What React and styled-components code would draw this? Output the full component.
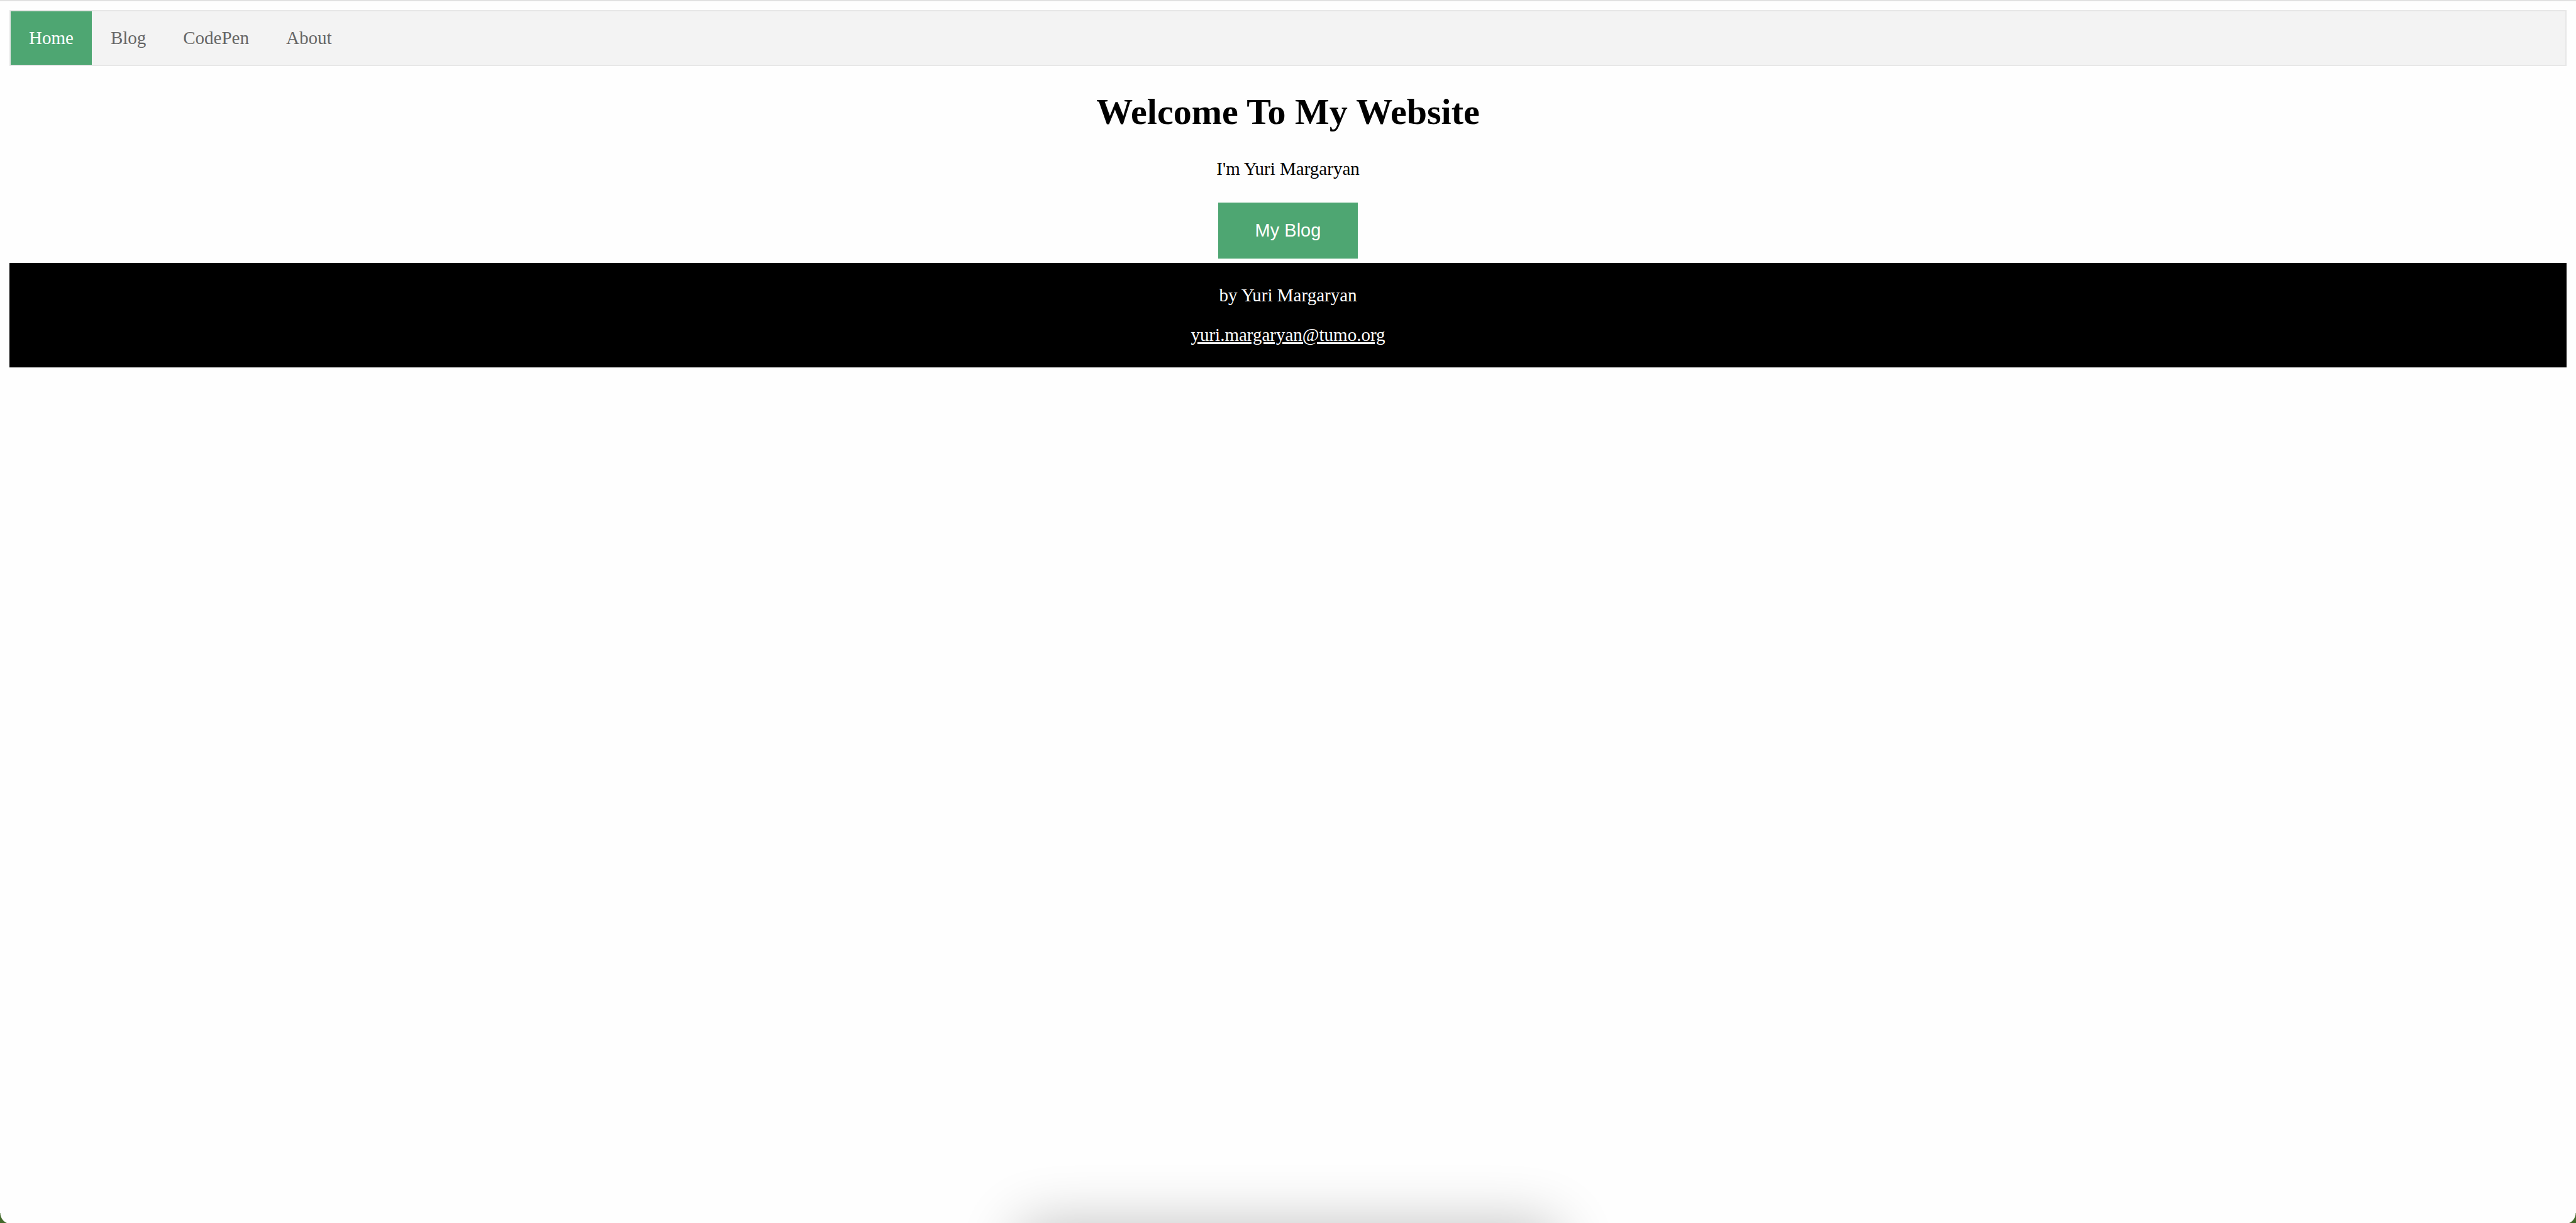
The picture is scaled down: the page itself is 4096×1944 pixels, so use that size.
import React from "react";
import styled, { createGlobalStyle } from "styled-components";

const GlobalStyle = createGlobalStyle`
  * {
    box-sizing: border-box;
  }

  body {
    margin: 0;
    background: #fefefe;
    color: #000;
    font-family: "Liberation Serif", "Times New Roman", serif;
    font-size: 29px;
    line-height: 33px;
  }
`;

const Page = styled.div`
  position: relative;
  display: flex;
  flex-direction: column;
  min-height: 100vh;
  padding: 14px 15px;
  overflow: hidden;
  border-top: 2px solid #e1e1e1;
`;

const NavBar = styled.nav`
  border: 2px solid #e7e7e7;
  background: #f3f3f3;
`;

const NavList = styled.ul`
  display: flex;
  gap: 1px;
  margin: 0;
  padding: 0;
  list-style: none;
`;

const NavLink = styled.a`
  display: block;
  padding: 26px 29px;
  background: ${({ $active }) => ($active ? "#4ea672" : "transparent")};
  color: ${({ $active }) => ($active ? "#fff" : "#666")};
  text-decoration: none;
`;

const Intro = styled.main`
  display: flex;
  flex-direction: column;
  align-items: center;
  padding: 40px 0 7px;
  text-align: center;
`;

const Title = styled.h1`
  margin: 0;
  font-size: 58px;
  line-height: 66px;
`;

const Tagline = styled.p`
  margin: 41px 0 37px;
`;

const BlogButton = styled.button`
  padding: 28px 59px;
  border: none;
  background: #4ea672;
  color: #fff;
  font-family: "Liberation Sans", Arial, sans-serif;
  font-size: 29px;
  line-height: 33px;
  cursor: pointer;
`;

const Footer = styled.footer`
  display: flex;
  flex-direction: column;
  align-items: center;
  gap: 30px;
  padding: 35px 0;
  background: #000;
  color: #fff;
`;

const FooterText = styled.p`
  margin: 0;
`;

const MailLink = styled.a`
  color: inherit;
  text-decoration-thickness: 3px;
`;

const DockShadow = styled.div`
  position: absolute;
  top: 100%;
  left: 39.5%;
  right: 39.5%;
  height: 160px;
  border-radius: 32px;
  box-shadow: 0 0 92px rgba(0, 0, 0, 0.24);
`;

const Corner = styled.div`
  position: absolute;
  bottom: 0;
  ${({ $side }) => $side}: 0;
  width: 11px;
  height: 16px;
  background: radial-gradient(
    circle at ${({ $side }) => ($side === "left" ? "18px" : "-7px")} 0,
    transparent 17px,
    #42692a 18px
  );
`;

const links = [
  { label: "Home", active: true },
  { label: "Blog" },
  { label: "CodePen" },
  { label: "About" },
];

export default function App() {
  return (
    <>
      <GlobalStyle />
      <Page>
        <NavBar>
          <NavList>
            {links.map(({ label, active }) => (
              <li key={label}>
                <NavLink href={`#${label.toLowerCase()}`} $active={active}>
                  {label}
                </NavLink>
              </li>
            ))}
          </NavList>
        </NavBar>
        <Intro>
          <Title>Welcome To My Website</Title>
          <Tagline>I'm Yuri Margaryan</Tagline>
          <BlogButton type="button">My Blog</BlogButton>
        </Intro>
        <Footer>
          <FooterText>by Yuri Margaryan</FooterText>
          <FooterText>
            <MailLink href="mailto:yuri.margaryan@tumo.org">
              yuri.margaryan@tumo.org
            </MailLink>
          </FooterText>
        </Footer>
        <DockShadow />
        <Corner $side="left" />
        <Corner $side="right" />
      </Page>
    </>
  );
}
